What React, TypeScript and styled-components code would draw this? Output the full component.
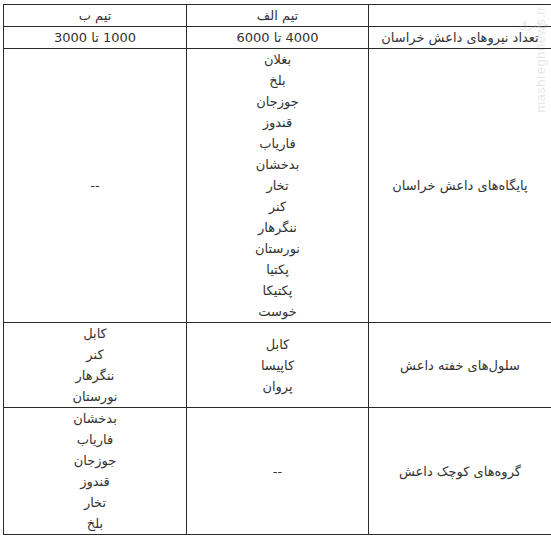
import React from 'react';
import styled, { createGlobalStyle } from 'styled-components';

const GlobalStyle = createGlobalStyle`
  html, body {
    margin: 0;
    padding: 0;
    background: #ffffff;
  }
`;

const Page = styled.div`
  position: relative;
  width: 551px;
  height: 537px;
  padding: 4px 0 0 3px;
  box-sizing: border-box;
  overflow: hidden;
  background: #ffffff;
`;

const Table = styled.table`
  direction: rtl;
  width: 548px;
  table-layout: fixed;
  border-collapse: collapse;
  font-family: "DejaVu Sans", "Noto Sans", sans-serif;
  font-size: 13px;
  color: #333333;
`;

const Cell = styled.td`
  border: 1px solid #2b2b2b;
  padding: 0;
  line-height: 21px;
  text-align: center;
  vertical-align: middle;
  white-space: nowrap;
`;

const Item = styled.div`
  height: 21px;
  line-height: 21px;
`;

const Watermark = styled.div`
  position: absolute;
  right: -42px;
  top: 52px;
  transform: rotate(-90deg);
  font-family: "Liberation Sans", Arial, sans-serif;
  font-size: 13px;
  letter-spacing: 0.5px;
  color: rgba(170, 170, 170, 0.3);
  pointer-events: none;
`;

const Logo = styled.div`
  position: absolute;
  right: 2px;
  top: 18px;
  font-family: "DejaVu Sans", sans-serif;
  font-size: 11px;
  color: rgba(170, 170, 170, 0.35);
  pointer-events: none;
`;

const List = ({ items }: { items: string[] }) => (
  <>
    {items.map((t, i) => (
      <Item key={i}>{t}</Item>
    ))}
  </>
);

const teamAStations = [
  'بغلان',
  'بلخ',
  'جوزجان',
  'قندوز',
  'فاریاب',
  'بدخشان',
  'تخار',
  'کنر',
  'ننگرهار',
  'نورستان',
  'پکتیا',
  'پکتیکا',
  'خوست',
];

const App: React.FC = () => {
  return (
    <Page>
      <GlobalStyle />
      <Table>
        <colgroup>
          <col style={{ width: 183 }} />
          <col style={{ width: 182 }} />
          <col style={{ width: 183 }} />
        </colgroup>
        <tbody>
          <tr>
            <Cell></Cell>
            <Cell>تیم الف</Cell>
            <Cell>تیم ب</Cell>
          </tr>
          <tr>
            <Cell>تعداد نیروهای داعش خراسان</Cell>
            <Cell>4000 تا 6000</Cell>
            <Cell>1000 تا 3000</Cell>
          </tr>
          <tr>
            <Cell>پایگاه‌های داعش خراسان</Cell>
            <Cell>
              <List items={teamAStations} />
            </Cell>
            <Cell>--</Cell>
          </tr>
          <tr>
            <Cell>سلول‌های خفته داعش</Cell>
            <Cell>
              <List items={['کابل', 'کاپیسا', 'پروان']} />
            </Cell>
            <Cell>
              <List items={['کابل', 'کنر', 'ننگرهار', 'نورستان']} />
            </Cell>
          </tr>
          <tr>
            <Cell>گروه‌های کوچک داعش</Cell>
            <Cell>--</Cell>
            <Cell>
              <List items={['بدخشان', 'فاریاب', 'جوزجان', 'قندوز', 'تخار', 'بلخ']} />
            </Cell>
          </tr>
        </tbody>
      </Table>
      <Logo>مشرق</Logo>
      <Watermark>mashreghnews.ir</Watermark>
    </Page>
  );
};

export default App;
